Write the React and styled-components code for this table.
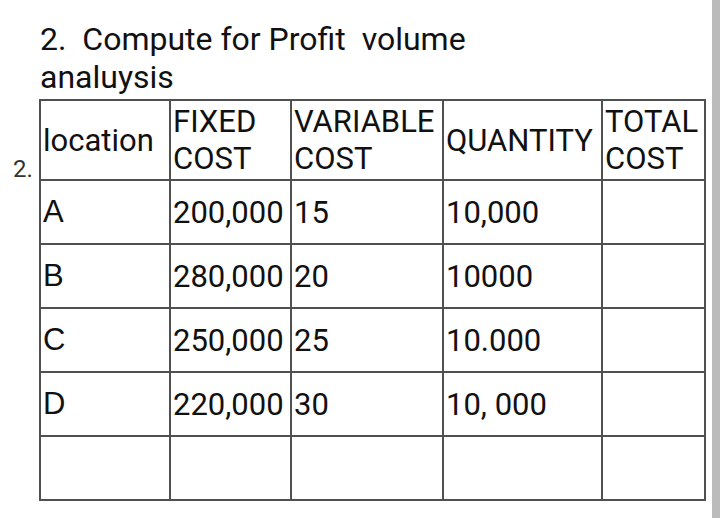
import styled, { createGlobalStyle } from "styled-components";

const GlobalStyle = createGlobalStyle`
	html, body {
		margin: 0;
		padding: 0;
		background: #ffffff;
	}
	body {
		font-family: Roboto, "Liberation Sans", sans-serif;
		color: #141414;
	}
`;

const Page = styled.div`
	display: flex;
	width: 720px;
	height: 518px;
	overflow: hidden;
`;

const Sheet = styled.main`
	flex: 1;
	padding-top: 20px;
`;

const ScrollStrip = styled.div`
	width: 8px;
	flex-shrink: 0;
	background: #bbbbbb;
`;

const Heading = styled.h2`
	margin: 0 0 3px 40px;
	font-size: 32px;
	font-weight: 400;
	line-height: normal;
	white-space: pre;
	color: #111111;
`;

const TableRow = styled.div`
	display: flex;
	align-items: flex-start;
`;

const Gutter = styled.div`
	box-sizing: border-box;
	width: 39px;
	padding-left: 13px;
	flex-shrink: 0;
`;

const Marker = styled.span`
	display: block;
	margin-top: 56px;
	font-size: 24px;
	line-height: normal;
	color: #333333;
`;

const Grid = styled.table`
	border-collapse: collapse;
	table-layout: fixed;
	width: 665px;
	font-size: 31px;
	line-height: normal;
`;

const Col = styled.col`
	width: ${(p) => p.$w}px;
`;

const Cell = styled.td`
	border: 2px solid #505050;
	padding: 0 0 0 2px;
	height: ${(p) => (p.$head ? 78 : 62)}px;
	vertical-align: middle;
	text-align: left;
	font-weight: 400;
	white-space: ${(p) => (p.$head ? "normal" : "nowrap")};
	font-family: ${(p) =>
		p.$letter ? '"Liberation Sans", Arial, sans-serif' : "Roboto, sans-serif"};
	color: #111111;
`;

const widths = [130, 121, 152, 159, 103];

const rows = [
	["A", "200,000", "15", "10,000", ""],
	["B", "280,000", "20", "10000", ""],
	["C", "250,000", "25", "10.000", ""],
	["D", "220,000", "30", "10, 000", ""],
	["", "", "", "", ""],
];

export default function App() {
	return (
		<Page>
			<GlobalStyle />
			<Sheet>
				<Heading>
					{"2.  Compute for Profit  volume"}
					<br />
					analuysis
				</Heading>
				<TableRow>
					<Gutter>
						<Marker>2.</Marker>
					</Gutter>
					<Grid>
						<colgroup>
							{widths.map((w, i) => (
								<Col key={i} $w={w} />
							))}
						</colgroup>
						<thead>
							<tr>
								<Cell as="th" $head>
									location
								</Cell>
								<Cell as="th" $head>
									FIXED COST
								</Cell>
								<Cell as="th" $head>
									VARIABLE COST
								</Cell>
								<Cell as="th" $head>
									QUANTITY
								</Cell>
								<Cell as="th" $head>
									TOTAL COST
								</Cell>
							</tr>
						</thead>
						<tbody>
							{rows.map((r, i) => (
								<tr key={i}>
									{r.map((v, j) => (
										<Cell key={j} $letter={j === 0}>
											{v}
										</Cell>
									))}
								</tr>
							))}
						</tbody>
					</Grid>
				</TableRow>
			</Sheet>
			<ScrollStrip />
		</Page>
	);
}
